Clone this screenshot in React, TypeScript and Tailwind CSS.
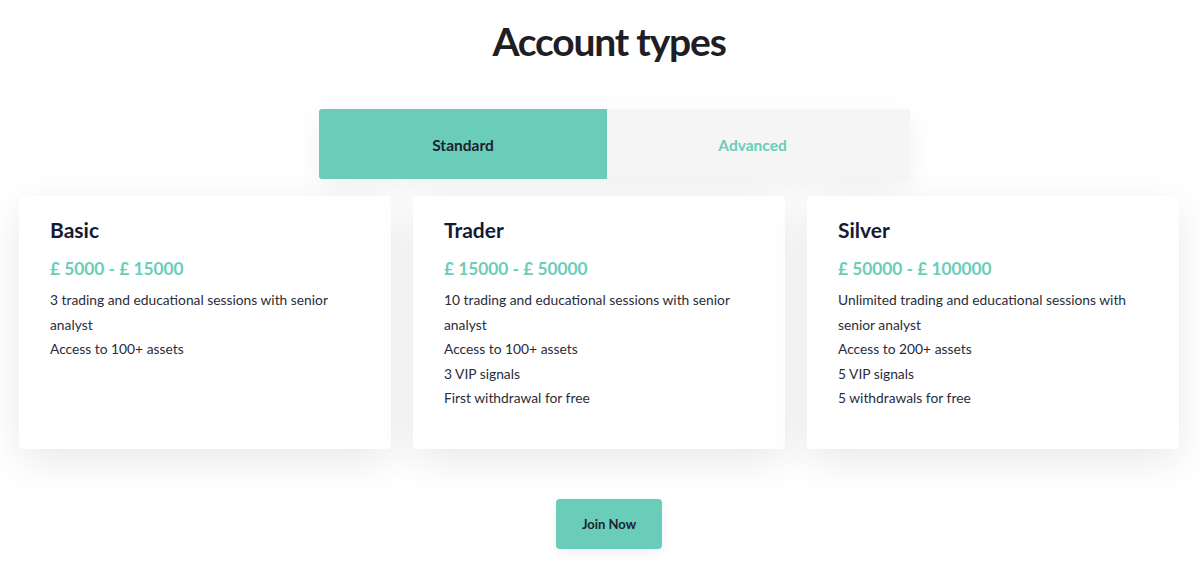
import React from "react";

const cards = [
  {
    title: "Basic",
    price: "£ 5000 - £ 15000",
    items: ["3 trading and educational sessions with senior analyst", "Access to 100+ assets"],
  },
  {
    title: "Trader",
    price: "£ 15000 - £ 50000",
    items: [
      "10 trading and educational sessions with senior analyst",
      "Access to 100+ assets",
      "3 VIP signals",
      "First withdrawal for free",
    ],
  },
  {
    title: "Silver",
    price: "£ 50000 - £ 100000",
    items: [
      "Unlimited trading and educational sessions with senior analyst",
      "Access to 200+ assets",
      "5 VIP signals",
      "5 withdrawals for free",
    ],
  },
];

export default function App() {
  return (
    <div className="w-[1200px] h-[563px] bg-white overflow-hidden font-['Lato',sans-serif] text-[#22222e]">
      <h1 className="text-center pl-[18px] text-[39px] font-bold leading-none pt-[22px] tracking-[-1.2px] text-[#1e1e24]">
        Account types
      </h1>
      <div className="flex justify-center pl-[29px] mt-[48px]">
        <div className="flex w-[591px] h-[70px] shadow-[0_8px_30px_rgba(0,0,0,0.06)]">
          <div className="w-[288px] bg-[#69cdb9] rounded-l-[3px] flex items-center justify-center pt-[3px] text-[15.5px] font-bold text-[#1d2230]">
            Standard
          </div>
          <div className="flex-1 bg-[#f5f5f5] flex items-center justify-center pt-[3px] pr-[12px] text-[15.5px] font-bold text-[#69cdb9]">
            Advanced
          </div>
        </div>
      </div>
      <div className="flex gap-[22px] px-[19px] mt-[17px]">
        {cards.map((c) => (
          <div
            key={c.title}
            className="w-[372px] h-[253px] bg-white rounded-[4px] shadow-[0_12px_40px_rgba(0,0,0,0.09)] px-[31px] pt-[20px]"
          >
            <div className="text-[21px] font-bold text-[#161a33] leading-[28px]">{c.title}</div>
            <div className="text-[17.3px] font-bold text-[#69cdb9] mt-[13px] leading-[24px]">{c.price}</div>
            <div className="mt-[7px] text-[13.8px] leading-[24.5px] text-[#2a2d3a] pr-[8px]">
              {c.items.map((i) => (
                <div key={i}>{i}</div>
              ))}
            </div>
          </div>
        ))}
      </div>
      <div className="flex justify-center pl-[18px] mt-[50px]">
        <button className="w-[106px] h-[50px] bg-[#69cdb9] rounded-[4px] pt-[2px] text-[13px] font-bold text-[#1d2230] shadow-[0_4px_12px_rgba(0,0,0,0.06)]">
          Join Now
        </button>
      </div>
    </div>
  );
}
